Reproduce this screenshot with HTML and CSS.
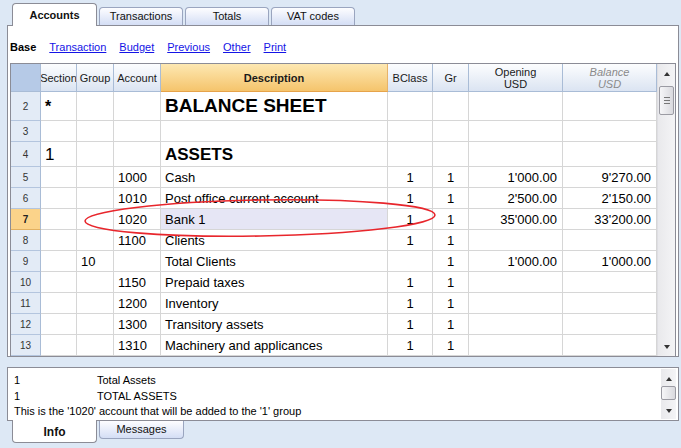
FILE: index.html
```html
<!DOCTYPE html>
<html lang="en">
<head>
    <meta charset="UTF-8">
    <title>Accounts</title>
    <link rel="stylesheet" href="styles.css">
</head>
<body>
    <div class="tabs tabs--top">
        <div class="tab tab--active">Accounts</div>
        <div class="tab">Transactions</div>
        <div class="tab">Totals</div>
        <div class="tab">VAT codes</div>
    </div>

    <div class="panel">
        <div class="views">
            <b>Base</b>
            <a href="#">Transaction</a>
            <a href="#">Budget</a>
            <a href="#">Previous</a>
            <a href="#">Other</a>
            <a href="#">Print</a>
        </div>

        <div class="grid-wrap">
            <div class="grid">
                <!-- header -->
                <div class="c h h--corner"></div>
                <div class="c h">Section</div>
                <div class="c h">Group</div>
                <div class="c h">Account</div>
                <div class="c h h--sort">Description</div>
                <div class="c h">BClass</div>
                <div class="c h">Gr</div>
                <div class="c h">Opening<br>USD</div>
                <div class="c h h--calc">Balance<br>USD</div>

                <div class="c rn">2</div>
                <div class="c big-star">*</div>
                <div class="c"></div>
                <div class="c"></div>
                <div class="c title">BALANCE SHEET</div>
                <div class="c"></div>
                <div class="c"></div>
                <div class="c"></div>
                <div class="c"></div>

                <div class="c rn">3</div>
                <div class="c"></div>
                <div class="c"></div>
                <div class="c"></div>
                <div class="c"></div>
                <div class="c"></div>
                <div class="c"></div>
                <div class="c"></div>
                <div class="c"></div>

                <div class="c rn">4</div>
                <div class="c big">1</div>
                <div class="c"></div>
                <div class="c"></div>
                <div class="c subtitle">ASSETS</div>
                <div class="c"></div>
                <div class="c"></div>
                <div class="c"></div>
                <div class="c"></div>

                <div class="c rn">5</div>
                <div class="c"></div>
                <div class="c"></div>
                <div class="c">1000</div>
                <div class="c">Cash</div>
                <div class="c ctr">1</div>
                <div class="c ctr">1</div>
                <div class="c num">1'000.00</div>
                <div class="c num">9'270.00</div>

                <div class="c rn">6</div>
                <div class="c"></div>
                <div class="c"></div>
                <div class="c">1010</div>
                <div class="c">Post office current account</div>
                <div class="c ctr">1</div>
                <div class="c ctr">1</div>
                <div class="c num">2'500.00</div>
                <div class="c num">2'150.00</div>

                <div class="c rn rn--current">7</div>
                <div class="c"></div>
                <div class="c"></div>
                <div class="c">1020</div>
                <div class="c c--current">Bank 1</div>
                <div class="c ctr">1</div>
                <div class="c ctr">1</div>
                <div class="c num">35'000.00</div>
                <div class="c num">33'200.00</div>

                <div class="c rn">8</div>
                <div class="c"></div>
                <div class="c"></div>
                <div class="c">1100</div>
                <div class="c">Clients</div>
                <div class="c ctr">1</div>
                <div class="c ctr">1</div>
                <div class="c"></div>
                <div class="c"></div>

                <div class="c rn">9</div>
                <div class="c"></div>
                <div class="c">10</div>
                <div class="c"></div>
                <div class="c">Total Clients</div>
                <div class="c"></div>
                <div class="c ctr">1</div>
                <div class="c num">1'000.00</div>
                <div class="c num">1'000.00</div>

                <div class="c rn">10</div>
                <div class="c"></div>
                <div class="c"></div>
                <div class="c">1150</div>
                <div class="c">Prepaid taxes</div>
                <div class="c ctr">1</div>
                <div class="c ctr">1</div>
                <div class="c"></div>
                <div class="c"></div>

                <div class="c rn">11</div>
                <div class="c"></div>
                <div class="c"></div>
                <div class="c">1200</div>
                <div class="c">Inventory</div>
                <div class="c ctr">1</div>
                <div class="c ctr">1</div>
                <div class="c"></div>
                <div class="c"></div>

                <div class="c rn">12</div>
                <div class="c"></div>
                <div class="c"></div>
                <div class="c">1300</div>
                <div class="c">Transitory assets</div>
                <div class="c ctr">1</div>
                <div class="c ctr">1</div>
                <div class="c"></div>
                <div class="c"></div>

                <div class="c rn">13</div>
                <div class="c"></div>
                <div class="c"></div>
                <div class="c">1310</div>
                <div class="c">Machinery and applicances</div>
                <div class="c ctr">1</div>
                <div class="c ctr">1</div>
                <div class="c"></div>
                <div class="c"></div>
            </div>

            <div class="vscroll">
                <span class="arrow arrow--up"></span>
                <span class="thumb thumb--tall"><i></i><i></i><i></i></span>
                <span class="vscroll__rest"></span>
                <span class="arrow arrow--down"></span>
            </div>

            <svg class="mark" width="646" height="292" viewBox="0 0 646 292">
                <ellipse cx="249" cy="154" rx="175" ry="18" transform="rotate(-1 249 154)"
                    fill="none" stroke="#e8262c" stroke-width="1.6"/>
            </svg>
        </div>
    </div>

    <div class="info">
        <div class="info__text">
            <div class="info__row"><span>1</span><span>Total Assets</span></div>
            <div class="info__row"><span>1</span><span>TOTAL ASSETS</span></div>
            <div>This is the '1020' account that will be added to the '1' group</div>
        </div>
        <div class="vscroll vscroll--small">
            <span class="arrow arrow--up"></span>
            <span class="thumb"></span>
            <span class="vscroll__rest"></span>
            <span class="arrow arrow--down"></span>
        </div>
    </div>

    <div class="tabs tabs--bottom">
        <div class="tab tab--active">Info</div>
        <div class="tab">Messages</div>
    </div>
</body>
</html>
```

FILE: styles.css
```css
:root {
    --bg: #dde8f5;
    --frame: #8b8c96;
    --cellLine: #d6d6d6;
    --headLine: #a9bcd6;
}

html,
body {
    height: 100%;
}

body {
    margin: 0;
    width: 681px;
    height: 448px;
    overflow: hidden;
    background: var(--bg);
    font-family: "Liberation Sans", Arial, sans-serif;
    font-size: 11px;
    color: #000;
}

/* tabs */
.tabs {
    display: flex;
    gap: 2px;
    padding-left: 12px;
}

.tabs--top {
    height: 25px;
    align-items: flex-end;
}

.tab {
    box-sizing: border-box;
    width: 84px;
    height: 18px;
    line-height: 17px;
    text-align: center;
    border: 1px solid #9aa5bf;
    border-radius: 4px 4px 0 0;
    background: linear-gradient(#fdfdff, #d4def5);
    color: #111;
}

.tabs--top .tab {
    border-bottom: none;
}

.tabs--top .tab--active {
    position: relative;
    width: 85px;
    height: 23px;
    margin-bottom: -1px;
    line-height: 22px;
    padding-bottom: 3px;
    border-color: var(--frame);
    background: #fff;
    font-weight: bold;
}

.tabs--bottom {
    align-items: flex-start;
}

.tabs--bottom .tab {
    width: 85px;
    border-top: none;
    border-radius: 0 0 4px 4px;
    line-height: 16px;
}

.tabs--bottom .tab--active {
    position: relative;
    height: 23px;
    margin-top: -1px;
    line-height: 24px;
    border-color: var(--frame);
    background: #fff;
    font-weight: bold;
    font-size: 12px;
}

/* main panel */
.panel {
    box-sizing: border-box;
    width: 672px;
    height: 332px;
    margin-left: 7px;
    border: 1px solid var(--frame);
    background: #fff;
}

.views {
    display: flex;
    gap: 13px;
    height: 37px;
    box-sizing: border-box;
    padding: 14px 0 0 2px;
    line-height: 14px;
}

.views a {
    color: #1414e6;
}

.grid-wrap {
    position: relative;
    display: flex;
    width: 666px;
    box-sizing: border-box;
    margin-left: 2px;
    border: 1px solid var(--frame);
    border-bottom: none;
}

.grid {
    display: grid;
    grid-template-columns: 30px 36px 37px 47px 227px 45px 36px 94px 94px;
    grid-template-rows: 28px 29px 21px 25px repeat(9, 21px);
    font-size: 13px;
}

.c {
    display: flex;
    align-items: center;
    box-sizing: border-box;
    padding: 0 4px;
    border-right: 1px solid var(--cellLine);
    border-bottom: 1px solid var(--cellLine);
    white-space: nowrap;
    overflow: hidden;
}

.ctr {
    justify-content: center;
}

.num {
    justify-content: flex-end;
    padding-right: 5px;
}

.h {
    justify-content: center;
    padding: 0;
    text-align: center;
    font-size: 11px;
    line-height: 12px;
    color: #1a1a1a;
    background: linear-gradient(#fcfdfe, #dbe4f2);
    border-right-color: var(--headLine);
    border-bottom-color: var(--headLine);
}

.h--corner {
    background: #b6cae7;
}

.h--sort {
    font-weight: bold;
    background: linear-gradient(#fde8b2, #f5c46c);
    border-bottom-color: #e6a34a;
    border-right-color: #e6b36a;
}

.h--calc {
    font-style: italic;
    color: #8a8a8a;
}

.rn {
    justify-content: center;
    padding: 0;
    font-size: 10px;
    color: #333;
    background: #e3ebf6;
    border-right-color: var(--headLine);
    border-bottom-color: #b4c5de;
}

.rn--current {
    background: #fbd38a;
    font-weight: bold;
    color: #222;
    border-bottom-color: #e2b060;
}

.c--current {
    background: #e6e6f5;
}

.title {
    font-size: 19px;
    font-weight: bold;
}

.subtitle {
    font-size: 17px;
    font-weight: bold;
    padding-top: 2px;
}

.big {
    font-size: 17px;
    padding-top: 2px;
}

.big-star {
    font-size: 16px;
    font-weight: bold;
    align-items: flex-start;
    padding-top: 6px;
}

.mark {
    position: absolute;
    top: 0;
    left: 0;
    pointer-events: none;
    overflow: visible;
}

/* scrollbars */
.vscroll {
    display: flex;
    flex-direction: column;
    align-items: center;
    width: 18px;
    box-sizing: border-box;
    padding: 8px 0 7px;
    background: linear-gradient(90deg, #e9e9ec, #f4f4f6);
    border-left: 1px solid #dedee3;
}

.vscroll__rest {
    flex: 1;
}

.arrow {
    width: 0;
    height: 0;
    border-left: 3px solid transparent;
    border-right: 3px solid transparent;
}

.arrow--up {
    border-bottom: 4px solid #333;
}

.arrow--down {
    border-top: 4px solid #333;
}

.thumb {
    display: flex;
    flex-direction: column;
    align-items: center;
    justify-content: center;
    gap: 2px;
    width: 15px;
    height: 29px;
    margin-top: 10px;
    box-sizing: border-box;
    border: 1px solid #9b9ba3;
    border-radius: 2px;
    background: linear-gradient(90deg, #f6f6f8, #d9d9de);
}

.thumb i {
    display: block;
    width: 6px;
    height: 1px;
    background: #777;
}

/* info panel */
.info {
    display: flex;
    justify-content: space-between;
    box-sizing: border-box;
    width: 672px;
    height: 54px;
    margin: 10px 0 0 7px;
    border: 1px solid var(--frame);
    background: #fff;
}

.info__text {
    padding: 5px 0 0 6px;
    line-height: 15.5px;
    font-size: 11px;
}

.info__row {
    display: grid;
    grid-template-columns: 83px auto;
}

.vscroll--small {
    height: 50px;
    width: 15px;
    margin: 1px 2px 0 0;
    padding: 8px 0 6px;
    border-left: none;
}

.vscroll--small .thumb {
    height: 14px;
    margin-top: 5px;
}
```
